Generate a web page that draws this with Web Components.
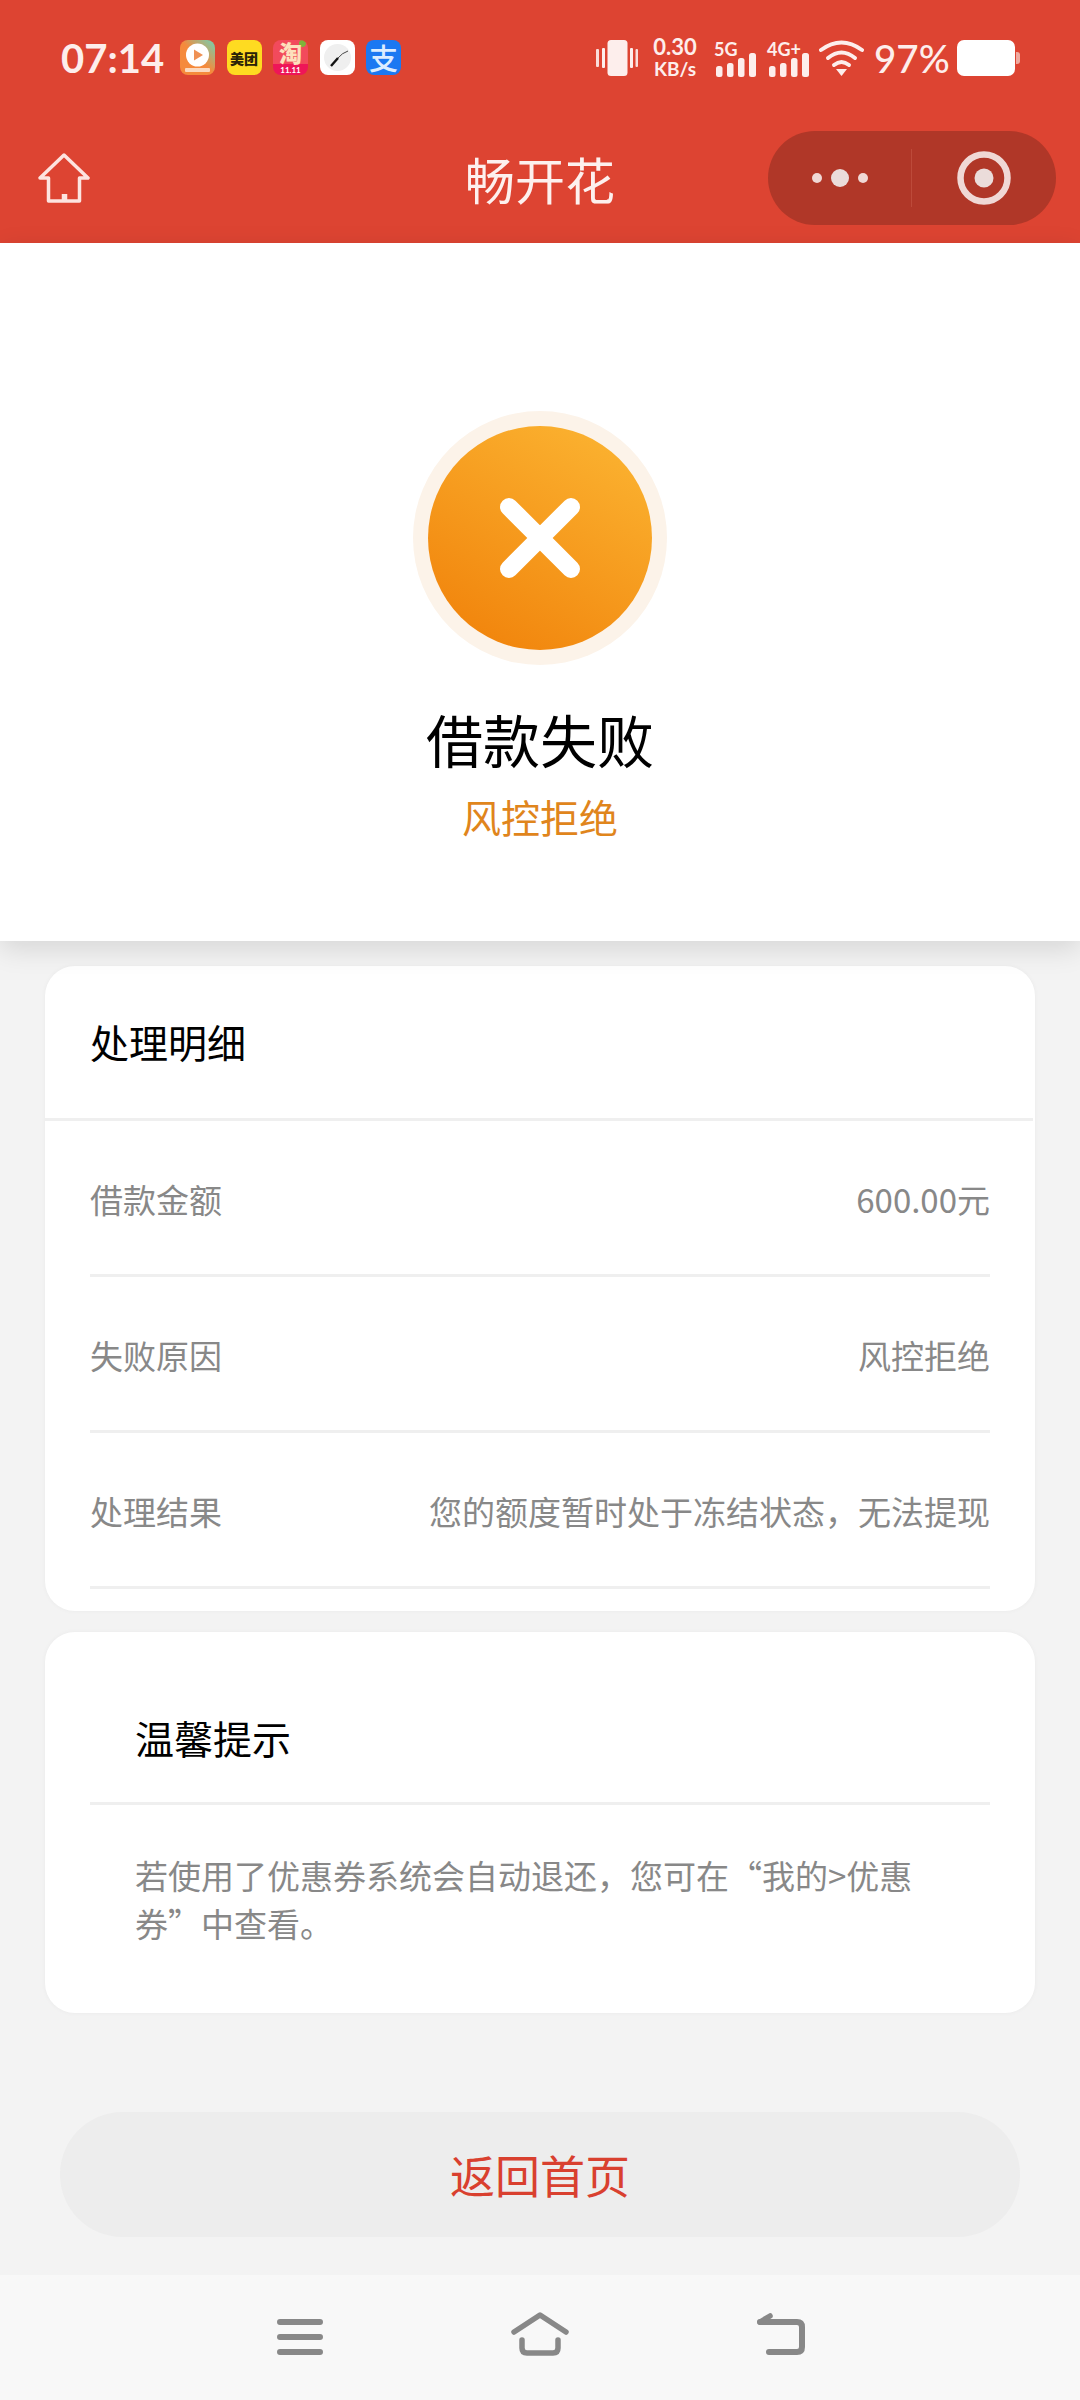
<!DOCTYPE html>
<html lang="zh-CN">
<head>
<meta charset="utf-8">
<title>畅开花</title>
<style>
    html, body { margin: 0; padding: 0; }
    body {
        width: 1080px;
        height: 2400px;
        overflow: hidden;
        background: #f3f3f3;
        font-family: "Noto Sans CJK SC", "Noto Sans", sans-serif;
    }
    .page { display: flex; flex-direction: column; height: 2400px; }
</style>
</head>
<body>
<div class="page">
    <status-bar></status-bar>
    <title-bar>畅开花</title-bar>
    <result-hero title="借款失败" reason="风控拒绝"></result-hero>
    <detail-card heading="处理明细">
        <detail-row label="借款金额">600.00元</detail-row>
        <detail-row label="失败原因">风控拒绝</detail-row>
        <detail-row label="处理结果">您的额度暂时处于冻结状态，无法提现</detail-row>
    </detail-card>
    <tip-card heading="温馨提示">若使用了优惠券系统会自动退还，您可在“我的&gt;优惠券”中查看。</tip-card>
    <home-button>返回首页</home-button>
    <system-keys></system-keys>
</div>

<script>
class StatusBar extends HTMLElement {
    constructor() {
        super();
        this.attachShadow({ mode: 'open' });
    }

    // the two mobile signal icons only differ by their label
    signal(label, gap) {
        return `
            <div class="signal" style="margin-left:${gap}px">
                <svg width="42" height="39" viewBox="0 0 42 39" fill="#fdeeec">
                    <rect x="2" y="28" width="6.5" height="11" rx="2.5"/>
                    <rect x="13" y="25" width="6.5" height="14" rx="2.5"/>
                    <rect x="24" y="20" width="6.5" height="19" rx="2.5"/>
                    <rect x="35" y="15" width="7" height="24" rx="2.5"/>
                </svg>
                <span>${label}</span>
            </div>
        `;
    }

    connectedCallback() {
        this.shadowRoot.innerHTML = `
            <style>
                :host {
                    display: flex;
                    align-items: center;
                    height: 115px;
                    box-sizing: border-box;
                    padding: 0 60px 0 61px;
                    background: #dd4432;
                    color: #fdeeec;
                    font-family: Lato, "Noto Sans", sans-serif;
                }
                .time { font-size: 40px; font-weight: 700; width: 119px; }
                .apps { display: flex; gap: 11.5px; }
                .app {
                    display: grid;
                    place-items: center;
                    width: 35px;
                    height: 35px;
                    border-radius: 8px;
                    font-family: "Noto Sans CJK SC", sans-serif;
                    font-weight: 700;
                    line-height: 1;
                }
                .app > * { grid-area: 1 / 1; }
                .app svg { width: 35px; height: 35px; }
                .meituan { background: #fedb21; color: #2a2208; font-size: 14px; font-weight: 900; }
                .taobao {
                    display: flex;
                    flex-direction: column;
                    align-items: center;
                    background: radial-gradient(circle at 84% 10%, #7fb33a 0 3px, transparent 4px), linear-gradient(#f24a5c 70%, #ee1558 70%);
                    color: #fde0bd;
                }
                .taobao b { display: block; height: 25px; line-height: 25px; font-size: 23px; }
                .taobao small { display: block; height: 10px; line-height: 10px; font-family: Lato, sans-serif; font-size: 8px; color: #fff; }
                .alipay { background: #1b78f2; color: #dcecff; font-size: 29px; font-weight: 500; }
                .icons { display: flex; align-items: center; margin-left: auto; }
                svg { display: block; }
                .speed { width: 46px; margin-left: 14px; text-align: center; font-weight: 700; }
                .speed div:first-child { font-size: 22px; line-height: 22px; }
                .speed div:last-child { font-size: 19px; line-height: 22px; }
                .signal { display: grid; font-weight: 700; font-size: 18px; line-height: 14px; }
                .signal > * { grid-area: 1 / 1; }
                .signal span { margin-top: 4px; white-space: nowrap; }
                .pct { font-size: 38.5px; font-weight: 500; margin-left: 10px; width: 83px; }
            </style>
            <div class="time">07:14</div>
            <div class="apps">
                <div class="app">
                    <svg viewBox="0 0 35 35">
                        <defs><linearGradient id="v" x1="0" y1="1" x2="1" y2="0"><stop offset="0.5" stop-color="#f58a3c"/><stop offset="1" stop-color="#6fd2b4"/></linearGradient></defs>
                        <rect width="35" height="35" rx="8" fill="url(#v)"/>
                        <circle cx="17.5" cy="15" r="11.5" fill="#fff"/>
                        <path d="M14 9.5 L23 15 L14 20.5 Z" fill="#ef9155"/>
                        <rect x="5" y="28" width="25" height="4" rx="1" fill="#fbd9bf"/>
                    </svg>
                </div>
                <div class="app meituan">美团</div>
                <div class="app taobao"><b>淘</b><small>11.11</small></div>
                <div class="app">
                    <svg viewBox="0 0 35 35">
                        <rect width="35" height="35" rx="8" fill="#fff"/>
                        <circle cx="17.5" cy="17.5" r="13.5" fill="#efefef"/>
                        <path d="M11 26 L18 18" stroke="#111" stroke-width="2.4"/>
                        <path d="M18 18 Q22 13 28 11" fill="none" stroke="#333" stroke-width="0.9"/>
                    </svg>
                </div>
                <div class="app alipay">支</div>
            </div>
            <div class="icons">
                <svg width="42" height="36" viewBox="0 0 42 36" fill="#fdeeec">
                    <rect x="11.5" y="0" width="20" height="36" rx="3.5"/>
                    <rect x="0" y="9" width="3" height="18" rx="1" opacity="0.9"/>
                    <rect x="6" y="8" width="3" height="20" rx="1"/>
                    <rect x="34" y="8" width="3" height="20" rx="1"/>
                    <rect x="39.5" y="9" width="2.5" height="18" rx="1" opacity="0.9"/>
                </svg>
                <div class="speed"><div>0.30</div><div>KB/s</div></div>
                ${this.signal('5G', 16)}
                ${this.signal('4G+', 11)}
                <svg style="margin-left:10px" width="45" height="36" viewBox="0 0 45 36" fill="none" stroke="#fdeeec" stroke-width="4" stroke-linecap="round">
                    <path d="M2 10 Q22.5 -5 43 10"/>
                    <path d="M9 18 Q22.5 7 36 18"/>
                    <path d="M15 25 Q22.5 19 30 25"/>
                    <path d="M17 29 L28 29 L22.5 36 Z" fill="#fdeeec" stroke="none"/>
                </svg>
                <div class="pct">97%</div>
                <svg width="63" height="36" viewBox="0 0 63 36">
                    <rect x="0" y="0" width="58" height="36" rx="7" fill="#fff"/>
                    <path d="M59 12 h1 a3 3 0 0 1 3 3 v6 a3 3 0 0 1 -3 3 h-1 Z" fill="#eeaaa0"/>
                </svg>
            </div>
        `;
    }
}

class TitleBar extends HTMLElement {
    constructor() {
        super();
        this.attachShadow({ mode: 'open' });
    }

    connectedCallback() {
        this.shadowRoot.innerHTML = `
            <style>
                :host {
                    display: grid;
                    grid-template-columns: 1fr auto 1fr;
                    align-items: center;
                    height: 128px;
                    box-sizing: border-box;
                    padding: 0 24px 2px;
                    background: #dd4432;
                    color: #fdf0ee;
                }
                .home { margin-left: 14px; }
                .title { font-size: 50px; line-height: 60px; }
                .capsule {
                    justify-self: end;
                    display: flex;
                    align-items: center;
                    width: 288px;
                    height: 94px;
                    border-radius: 47px;
                    background: #b03728;
                }
                .more { flex: 0 0 143px; display: flex; justify-content: center; align-items: center; gap: 9px; }
                .line { width: 1px; height: 58px; background: #bd4a3a; }
                .target { flex: 1; display: flex; justify-content: center; }
                i { display: block; border-radius: 50%; background: #f0d8d5; width: 10px; height: 10px; }
                i.big { width: 18px; height: 18px; background: #ebdcda; }
                svg { display: block; }
            </style>
            <svg class="home" width="52" height="50" viewBox="0 0 52 50" fill="none" stroke="#fde4e0" stroke-width="3.5" stroke-linejoin="round">
                <path d="M26 2 L50 25 L41.5 25 L41.5 48 L10.5 48 L10.5 25 L2 25 Z"/>
                <path d="M26.5 41 V48" stroke-width="5.5" stroke-linejoin="miter"/>
            </svg>
            <div class="title"><slot></slot></div>
            <div class="capsule">
                <div class="more"><i></i><i class="big"></i><i></i></div>
                <div class="line"></div>
                <div class="target">
                    <svg width="54" height="54" viewBox="0 0 54 54">
                        <circle cx="27" cy="27" r="23.5" fill="none" stroke="#f0d8d5" stroke-width="6.5"/>
                        <circle cx="27" cy="27" r="9.5" fill="#ebdcda"/>
                    </svg>
                </div>
            </div>
        `;
    }
}

class ResultHero extends HTMLElement {
    constructor() {
        super();
        this.attachShadow({ mode: 'open' });
    }

    connectedCallback() {
        this.shadowRoot.innerHTML = `
            <style>
                :host {
                    display: flex;
                    flex-direction: column;
                    align-items: center;
                    height: 698px;
                    box-sizing: border-box;
                    padding-top: 168px;
                    background: #fff;
                    box-shadow: 0 8px 26px rgba(0, 0, 0, 0.12);
                    position: relative;
                }
                .ring {
                    width: 254px;
                    height: 254px;
                    border-radius: 50%;
                    background: #fcf3e9;
                    display: flex;
                    align-items: center;
                    justify-content: center;
                }
                .disc {
                    width: 224px;
                    height: 224px;
                    border-radius: 50%;
                    background: linear-gradient(30deg, #f07f08, #fcb734);
                    display: flex;
                    align-items: center;
                    justify-content: center;
                }
                svg { display: block; }
                h1 { margin: 35px 0 0; font-size: 57px; font-weight: 400; line-height: 76px; color: #000; }
                p { margin: 15px 0 0; font-size: 39px; line-height: 50px; color: #e0851c; }
            </style>
            <div class="ring">
                <div class="disc">
                    <svg width="84" height="84" viewBox="0 0 84 84">
                        <path d="M11 11 L73 73 M73 11 L11 73" stroke="#fff" stroke-width="18" stroke-linecap="round"/>
                    </svg>
                </div>
            </div>
            <h1>${this.getAttribute('title')}</h1>
            <p>${this.getAttribute('reason')}</p>
        `;
    }
}

class DetailCard extends HTMLElement {
    constructor() {
        super();
        this.attachShadow({ mode: 'open' });
    }

    connectedCallback() {
        this.shadowRoot.innerHTML = `
            <style>
                :host {
                    display: block;
                    margin: 25px 45px 0;
                    padding-bottom: 22px;
                    background: #fff;
                    border-radius: 30px;
                    box-shadow: 0 0 5px rgba(0, 0, 0, 0.04);
                }
                .head {
                    height: 155px;
                    box-sizing: border-box;
                    padding: 0 0 3px 45px;
                    margin-right: 2px;
                    display: flex;
                    align-items: center;
                    font-size: 39px;
                    color: #000;
                    border-bottom: 3px solid #efefef;
                }
            </style>
            <div class="head">${this.getAttribute('heading')}</div>
            <slot></slot>
        `;
    }
}

class DetailRow extends HTMLElement {
    constructor() {
        super();
        this.attachShadow({ mode: 'open' });
    }

    connectedCallback() {
        this.shadowRoot.innerHTML = `
            <style>
                :host {
                    display: flex;
                    justify-content: space-between;
                    align-items: center;
                    height: 156px;
                    box-sizing: border-box;
                    margin: 0 45px;
                    padding-top: 2px;
                    border-bottom: 3px solid #efefef;
                    font-size: 33px;
                    color: #888;
                }
            </style>
            <span>${this.getAttribute('label')}</span>
            <span><slot></slot></span>
        `;
    }
}

class TipCard extends HTMLElement {
    constructor() {
        super();
        this.attachShadow({ mode: 'open' });
    }

    connectedCallback() {
        this.shadowRoot.innerHTML = `
            <style>
                :host {
                    display: block;
                    margin: 21px 45px 0;
                    height: 381px;
                    background: #fff;
                    border-radius: 30px;
                    box-shadow: 0 0 5px rgba(0, 0, 0, 0.04);
                }
                .head {
                    margin: 0 45px;
                    height: 173px;
                    box-sizing: border-box;
                    padding: 39px 0 0 45px;
                    display: flex;
                    align-items: center;
                    font-size: 39px;
                    color: #000;
                    border-bottom: 3px solid #efefef;
                }
                .body {
                    padding: 46px 115px 0 90px;
                    font-size: 33px;
                    line-height: 48px;
                    color: #888;
                }
            </style>
            <div class="head">${this.getAttribute('heading')}</div>
            <div class="body"><slot></slot></div>
        `;
    }
}

class HomeButton extends HTMLElement {
    constructor() {
        super();
        this.attachShadow({ mode: 'open' });
    }

    connectedCallback() {
        this.shadowRoot.innerHTML = `
            <style>
                :host {
                    display: flex;
                    align-items: center;
                    justify-content: center;
                    margin: 99px 60px 0;
                    height: 125px;
                    border-radius: 63px;
                    background: #ededed;
                    color: #d9402f;
                    font-size: 45px;
                }
            </style>
            <slot></slot>
        `;
    }
}

class SystemKeys extends HTMLElement {
    constructor() {
        super();
        this.attachShadow({ mode: 'open' });
    }

    connectedCallback() {
        this.shadowRoot.innerHTML = `
            <style>
                :host {
                    display: flex;
                    align-items: center;
                    gap: 188px;
                    margin-top: auto;
                    height: 125px;
                    box-sizing: border-box;
                    padding: 0 0 7px 277px;
                    background: #f8f8f8;
                }
                svg { display: block; }
            </style>
            <svg width="46" height="44" viewBox="0 0 46 44" fill="none" stroke="#888" stroke-width="6" stroke-linecap="round">
                <path d="M3 10 H43 M3 25 H43 M3 40 H43"/>
            </svg>
            <svg width="58" height="44" viewBox="0 0 58 44" fill="none" stroke="#888" stroke-linecap="round" stroke-linejoin="round">
                <path d="M3 20 L29 3 L55 20" stroke-width="5.5"/>
                <path d="M11 28 V36 Q11 41 16 41 H42 Q47 41 47 36 V28" stroke-width="5.5"/>
            </svg>
            <svg width="48" height="44" viewBox="0 0 48 44" fill="none" stroke="#888" stroke-linecap="round" stroke-linejoin="round">
                <path d="M3 10 H40 Q45 10 45 15 V35 Q45 40 40 40 H12" stroke-width="6"/>
                <path d="M13 4 L3 10" stroke-width="5.5"/>
            </svg>
        `;
    }
}

customElements.define('status-bar', StatusBar);
customElements.define('title-bar', TitleBar);
customElements.define('result-hero', ResultHero);
customElements.define('detail-card', DetailCard);
customElements.define('detail-row', DetailRow);
customElements.define('tip-card', TipCard);
customElements.define('home-button', HomeButton);
customElements.define('system-keys', SystemKeys);
</script>
</body>
</html>
